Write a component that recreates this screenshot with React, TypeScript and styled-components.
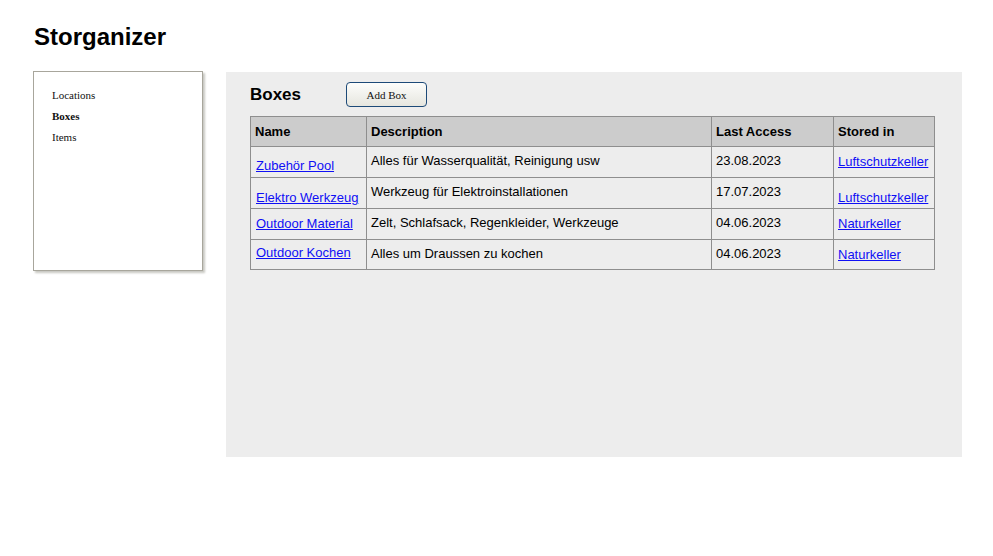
import React from 'react'
import styled, { createGlobalStyle } from 'styled-components'

const GlobalStyle = createGlobalStyle`
  body {
    margin: 0;
    background: #ffffff;
    font-family: "Liberation Sans", Arial, sans-serif;
    color: #000;
  }
`

const Page = styled.div`
  padding: 22px 31px 0 33px;
`

const Title = styled.h1`
  margin: 0 0 20px 1px;
  font-size: 24px;
  line-height: 30px;
  font-weight: bold;
`

const Layout = styled.div`
  display: flex;
  align-items: flex-start;
  gap: 23px;
`

const Sidebar = styled.nav`
  box-sizing: border-box;
  width: 170px;
  height: 200px;
  margin-top: -1px;
  padding: 17px 18px;
  background: #fff;
  border: 1px solid #a8a69c;
  box-shadow: 2px 2px 2px #c8c8c2;
  display: flex;
  flex-direction: column;
  gap: 8px;
`

const NavItem = styled.div<{ $active?: boolean }>`
  font-family: "Liberation Serif", "Times New Roman", serif;
  font-size: 11px;
  line-height: 13px;
  font-weight: ${(p) => (p.$active ? 'bold' : 'normal')};
  color: #111;
`

const Main = styled.main`
  box-sizing: border-box;
  width: 736px;
  height: 385px;
  background: #ededed;
  padding: 10px 24px;
`

const Header = styled.div`
  display: flex;
  align-items: center;
  gap: 45px;
  margin-bottom: 9px;
`

const Heading = styled.h2`
  margin: 0;
  font-size: 17px;
  line-height: 22px;
  font-weight: bold;
`

const AddButton = styled.button`
  box-sizing: border-box;
  width: 81px;
  height: 25px;
  padding: 0;
  border: 1px solid #1d4a78;
  border-radius: 4px;
  background: linear-gradient(#fdfdfb, #e6e6df);
  font-family: "Liberation Serif", "Times New Roman", serif;
  font-size: 11px;
  color: #111;
  cursor: pointer;
`

const Table = styled.table`
  border-collapse: collapse;
  table-layout: fixed;
  width: 685px;
  font-size: 13px;
  line-height: 15px;
`

const HeadCell = styled.th<{ $w: number }>`
  width: ${(p) => p.$w}px;
  height: 30px;
  box-sizing: border-box;
  padding: 0 4px;
  text-align: left;
  vertical-align: middle;
  background: #cccccc;
  border: 1px solid #8e8e8e;
  font-weight: bold;
`

const Cell = styled.td<{ $top: number; $h?: number; $left?: number }>`
  height: ${(p) => p.$h ?? 30}px;
  box-sizing: border-box;
  padding: ${(p) => p.$top}px 4px 0 ${(p) => p.$left ?? 4}px;
  vertical-align: top;
  border: 1px solid #8e8e8e;
  white-space: nowrap;
  overflow: hidden;
`

const Link = styled.a`
  color: #0f0ff5;
  text-decoration: underline;
`

type Box = {
  name: string
  description: string
  lastAccess: string
  storedIn: string
  offsets: [number, number, number, number]
}

const boxes: Box[] = [
  {
    name: 'Zubehör Pool',
    description: 'Alles für Wasserqualität, Reinigung usw',
    lastAccess: '23.08.2023',
    storedIn: 'Luftschutzkeller',
    offsets: [11, 6, 6, 7],
  },
  {
    name: 'Elektro Werkzeug',
    description: 'Werkzeug für Elektroinstallationen',
    lastAccess: '17.07.2023',
    storedIn: 'Luftschutzkeller',
    offsets: [12, 6, 6, 12],
  },
  {
    name: 'Outdoor Material',
    description: 'Zelt, Schlafsack, Regenkleider, Werkzeuge',
    lastAccess: '04.06.2023',
    storedIn: 'Naturkeller',
    offsets: [7, 6, 6, 7],
  },
  {
    name: 'Outdoor Kochen',
    description: 'Alles um Draussen zu kochen',
    lastAccess: '04.06.2023',
    storedIn: 'Naturkeller',
    offsets: [5, 6, 6, 7],
  },
]

export default function App() {
  return (
    <>
      <GlobalStyle />
      <Page>
        <Title>Storganizer</Title>
        <Layout>
          <Sidebar>
            <NavItem>Locations</NavItem>
            <NavItem $active>Boxes</NavItem>
            <NavItem>Items</NavItem>
          </Sidebar>

          <Main>
            <Header>
              <Heading>Boxes</Heading>
              <AddButton>Add Box</AddButton>
            </Header>

            <Table>
              <thead>
                <tr>
                  <HeadCell $w={116}>Name</HeadCell>
                  <HeadCell $w={345}>Description</HeadCell>
                  <HeadCell $w={122}>Last Access</HeadCell>
                  <HeadCell $w={101}>Stored in</HeadCell>
                </tr>
              </thead>
              <tbody>
                {boxes.map((b, i) => {
                  const h = i === boxes.length - 1 ? 30 : 31
                  return (
                    <tr key={b.name}>
                      <Cell $top={b.offsets[0]} $h={h} $left={5}>
                        <Link href="#">{b.name}</Link>
                      </Cell>
                      <Cell $top={b.offsets[1]} $h={h}>{b.description}</Cell>
                      <Cell $top={b.offsets[2]} $h={h}>{b.lastAccess}</Cell>
                      <Cell $top={b.offsets[3]} $h={h}>
                        <Link href="#">{b.storedIn}</Link>
                      </Cell>
                    </tr>
                  )
                })}
              </tbody>
            </Table>
          </Main>
        </Layout>
      </Page>
    </>
  )
}
